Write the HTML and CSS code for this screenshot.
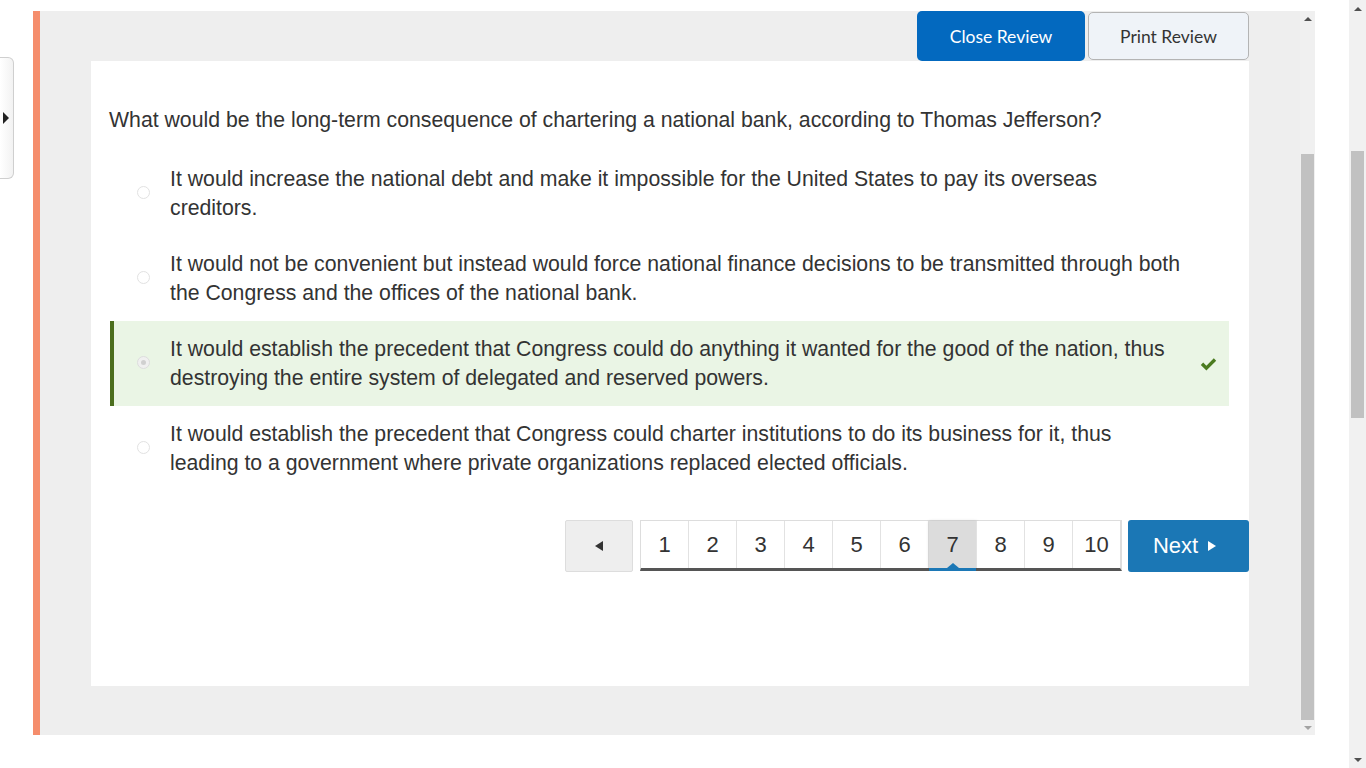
FILE: index.html
```html
<!DOCTYPE html>
<html>
<head>
<meta charset="utf-8">
<link rel="stylesheet" href="styles.css">
</head>
<body>
<div class="page">
  <div class="gutter">
    <div class="side-tab"><span class="side-arrow"></span></div>
  </div>
  <div class="panel">
    <div class="panel-body">
      <div class="toolbar">
        <button class="btn btn-primary">Close Review</button>
        <button class="btn btn-secondary">Print Review</button>
      </div>
      <div class="card">
        <div class="question">What would be the long-term consequence of chartering a national bank, according to Thomas Jefferson?</div>
        <div class="options">
          <div class="option">
            <span class="radio"></span>
            <span class="opt-text">It would increase the national debt and make it impossible for the United States to pay its overseas creditors.</span>
            <span class="opt-mark"></span>
          </div>
          <div class="option">
            <span class="radio"></span>
            <span class="opt-text">It would not be convenient but instead would force national finance decisions to be transmitted through both the Congress and the offices of the national bank.</span>
            <span class="opt-mark"></span>
          </div>
          <div class="option option-correct">
            <span class="radio radio-checked"></span>
            <span class="opt-text">It would establish the precedent that Congress could do anything it wanted for the good of the nation, thus destroying the entire system of delegated and reserved powers.</span>
            <span class="opt-mark">
              <svg width="17" height="13" viewBox="0 0 17 13"><path d="M0.8 6.9 L3.2 4.5 L6.4 7.7 L13.8 0.3 L16.2 2.7 L6.4 12.5 Z" fill="#4b7b20"/></svg>
            </span>
          </div>
          <div class="option">
            <span class="radio"></span>
            <span class="opt-text">It would establish the precedent that Congress could charter institutions to do its business for it, thus leading to a government where private organizations replaced elected officials.</span>
            <span class="opt-mark"></span>
          </div>
        </div>
        <div class="pager">
          <button class="prev"><span class="tri-left"></span></button>
          <div class="pages">
            <span class="pg">1</span>
            <span class="pg">2</span>
            <span class="pg">3</span>
            <span class="pg">4</span>
            <span class="pg">5</span>
            <span class="pg">6</span>
            <span class="pg pg-active">7</span>
            <span class="pg">8</span>
            <span class="pg">9</span>
            <span class="pg">10</span>
          </div>
          <button class="next">Next <span class="tri-right"></span></button>
        </div>
      </div>
    </div>
    <div class="inner-scroll">
      <span class="sb-up"></span>
      <div class="sb-track"><div class="inner-thumb"></div></div>
      <span class="sb-down"></span>
    </div>
  </div>
  <div class="spacer"></div>
  <div class="outer-scroll">
    <span class="sb-up"></span>
    <div class="sb-track"><div class="outer-thumb"></div></div>
    <span class="sb-down"></span>
  </div>
</div>
</body>
</html>
```

FILE: styles.css
```css
html, body {
  margin: 0;
  padding: 0;
  background: #ffffff;
}
body {
  width: 1366px;
  height: 768px;
  overflow: hidden;
  font-family: "Liberation Sans", Arial, sans-serif;
  color: #333333;
}
.page {
  display: flex;
  width: 1366px;
  height: 768px;
}
.gutter {
  width: 33px;
  flex: none;
}
.side-tab {
  margin-top: 57px;
  width: 13px;
  height: 120px;
  border: 1px solid #cfcfcf;
  border-left: none;
  border-radius: 0 6px 6px 0;
  background: linear-gradient(to right, #ffffff, #f2f2f2);
  display: flex;
  align-items: center;
  justify-content: flex-start;
}
.side-arrow {
  width: 0;
  height: 0;
  margin-left: 3px;
  border-top: 6px solid transparent;
  border-bottom: 6px solid transparent;
  border-left: 6px solid #222222;
}
.panel {
  margin-top: 11px;
  width: 1282px;
  height: 724px;
  flex: none;
  display: flex;
  box-sizing: border-box;
  border-left: 7px solid #f58d6c;
  background: #eeeeee;
}
.panel-body {
  width: 1260px;
  flex: none;
  box-sizing: border-box;
  padding-left: 51px;
  padding-right: 51px;
  display: flex;
  flex-direction: column;
}
.toolbar {
  height: 50px;
  display: flex;
  justify-content: flex-end;
  align-items: flex-start;
  gap: 3px;
}
.btn {
  font-family: Lato, "Liberation Sans", sans-serif;
  font-size: 17.5px;
  border-radius: 5px;
  cursor: pointer;
  padding: 0;
}
.btn-primary {
  width: 168px;
  height: 50px;
  background: #0369bf;
  color: #ffffff;
  border: none;
}
.btn-secondary {
  margin-top: 1px;
  width: 161px;
  height: 48px;
  background: #eff3f8;
  color: #333333;
  border: 1px solid #b4b4b4;
}
.card {
  height: 625px;
  background: #ffffff;
  box-sizing: border-box;
  padding-top: 45px;
}
.question {
  padding-left: 18px;
  font-size: 21.25px;
  line-height: 29px;
  margin-bottom: 16px;
}
.options {
  margin-left: 19px;
  margin-right: 20px;
}
.option {
  display: flex;
  align-items: center;
  box-sizing: border-box;
  border-left: 4px solid transparent;
  padding: 14px 0 13px 23px;
  font-size: 21.25px;
  line-height: 29px;
}
.option-correct {
  border-left-color: #4b6e1d;
  background: #eaf5e5;
}
.radio {
  width: 13px;
  height: 13px;
  flex: none;
  box-sizing: border-box;
  border: 1px solid #e2e2e2;
  border-radius: 50%;
  background: #ffffff;
  margin-right: 20px;
  margin-top: -3px;
  position: relative;
}
.radio-checked {
  background: #f0f0f0;
  border-color: #dddddd;
}
.radio-checked::after {
  content: "";
  position: absolute;
  left: 3px;
  top: 3px;
  width: 5px;
  height: 5px;
  border-radius: 50%;
  background: #d0d0d0;
}
.opt-text {
  width: 1012px;
  flex: none;
}
.opt-mark {
  flex: 1;
  display: flex;
  justify-content: center;
  padding-left: 6px;
}
.pager {
  margin-top: 29px;
  display: flex;
  justify-content: flex-end;
  align-items: flex-start;
}
.prev {
  width: 68px;
  height: 52px;
  background: #eeeeee;
  border: 1px solid #dddddd;
  border-radius: 2px;
  display: flex;
  align-items: center;
  justify-content: center;
  padding: 0;
  margin-right: 7px;
}
.tri-left {
  width: 0;
  height: 0;
  border-top: 5px solid transparent;
  border-bottom: 5px solid transparent;
  border-right: 8px solid #333333;
}
.pages {
  display: flex;
  border: 1px solid #dddddd;
  border-bottom: 3px solid #555555;
  border-right-width: 2px;
  margin-right: 6px;
}
.pg {
  width: 47px;
  height: 47px;
  border-right: 1px solid #e2e2e2;
  display: flex;
  align-items: center;
  justify-content: center;
  font-size: 22px;
  color: #333333;
  position: relative;
  background: #ffffff;
}
.pg:last-child {
  border-right: none;
}
.pg-active {
  background: #dcdcdc;
  box-shadow: 0 0 3px rgba(0,0,0,0.15);
}
.pg-active::after {
  content: "";
  position: absolute;
  left: 0;
  right: 0;
  bottom: -3px;
  height: 3px;
  background: #1c78b6;
}
.pg-active::before {
  content: "";
  position: absolute;
  left: 50%;
  margin-left: -6px;
  bottom: 0;
  width: 0;
  height: 0;
  border-left: 6px solid transparent;
  border-right: 6px solid transparent;
  border-bottom: 5px solid #1c78b6;
}
.next {
  width: 121px;
  height: 52px;
  background: #1b77b5;
  color: #ffffff;
  border: none;
  border-radius: 3px;
  font-family: "Liberation Sans", Arial, sans-serif;
  font-size: 22px;
  display: flex;
  align-items: center;
  justify-content: center;
  gap: 10px;
  padding: 0 8px 0 0;
}
.tri-right {
  width: 0;
  height: 0;
  border-top: 5px solid transparent;
  border-bottom: 5px solid transparent;
  border-left: 8px solid #ffffff;
}
.inner-scroll {
  width: 15px;
  flex: none;
  background: #f0f0f0;
  display: flex;
  flex-direction: column;
  align-items: center;
}
.sb-track {
  flex: 1;
  width: 100%;
  position: relative;
}
.inner-thumb {
  position: absolute;
  left: 1px;
  right: 1px;
  top: 128px;
  bottom: 0;
  background: #c1c1c1;
}
.sb-up, .sb-down {
  height: 15px;
  width: 100%;
  display: flex;
  align-items: center;
  justify-content: center;
  flex: none;
}
.sb-up::before {
  content: "";
  width: 0;
  height: 0;
  border-left: 4px solid transparent;
  border-right: 4px solid transparent;
  border-bottom: 4px solid #505050;
}
.sb-down::before {
  content: "";
  width: 0;
  height: 0;
  border-left: 4px solid transparent;
  border-right: 4px solid transparent;
  border-top: 4px solid #a3a3a3;
}
.spacer {
  flex: 1;
}
.outer-scroll {
  width: 17px;
  flex: none;
  height: 768px;
  background: #f1f1f1;
  display: flex;
  flex-direction: column;
  align-items: center;
}
.outer-scroll .sb-up, .outer-scroll .sb-down {
  height: 17px;
}
.outer-scroll .sb-down::before {
  border-top-color: #505050;
}
.outer-thumb {
  position: absolute;
  left: 2px;
  right: 2px;
  top: 134px;
  height: 267px;
  background: #c1c1c1;
}
```
